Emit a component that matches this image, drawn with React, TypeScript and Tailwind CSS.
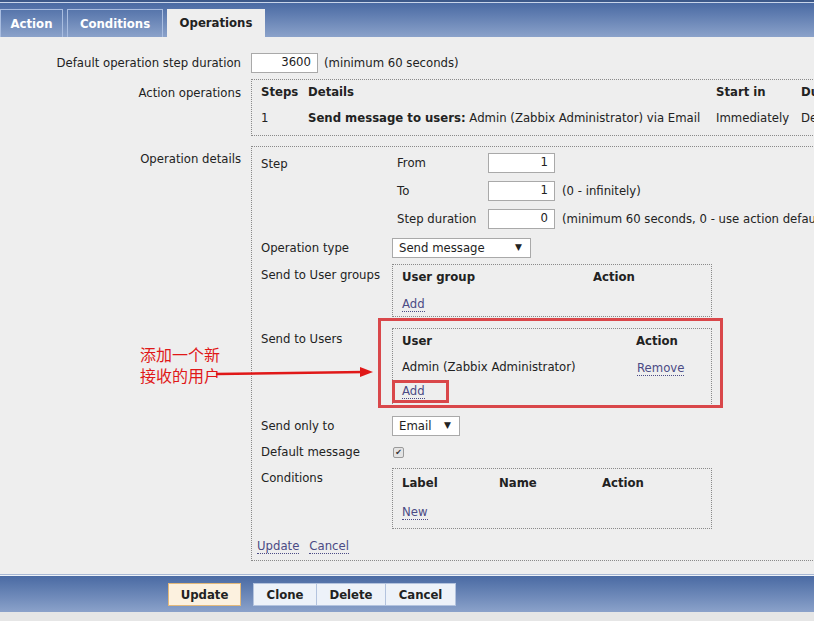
import React from "react";

const Link = ({ children }: { children: React.ReactNode }) => (
  <span className="text-[#4b4b85] border-b border-dotted border-[#4b4b85] leading-[14px]">{children}</span>
);

const Input = ({ value, w }: { value: string; w: string }) => (
  <div className={`${w} h-[20px] shrink-0 bg-white border border-[#a9a9a9] flex items-center justify-end pr-[6px]`}>{value}</div>
);

const Select = ({ value, w }: { value: string; w: string }) => (
  <div className={`${w} h-[20px] shrink-0 bg-white border border-[#a9a9a9] flex items-center justify-between pl-[6px] pr-[8px]`}>
    <span className="pt-[2px]">{value}</span>
    <span className="text-[9px]">▼</span>
  </div>
);

const Btn = "font-['DejaVu_Sans_Condensed','DejaVu_Sans',sans-serif] font-bold text-[13px]";

export default function App() {
  return (
    <div className="w-[814px] h-[621px] overflow-hidden relative bg-[#eeeeee] text-[11.7px] text-[#222] font-['DejaVu_Sans',sans-serif]">
      {/* header */}
      <div className="h-[2px] bg-[#3c5889]" />
      <div className="h-[1px] bg-[#c9d5ea]" />
      <div className="h-[34px] bg-gradient-to-b from-[#4a6aa3] to-[#8ba2ca] flex items-end gap-[4px]">
        <div className={`w-[63px] h-[28px] border border-b-0 border-[#a9bde0] flex items-center justify-center text-white ${Btn}`}>Action</div>
        <div className={`w-[96px] h-[28px] border border-b-0 border-[#a9bde0] flex items-center justify-center text-white ${Btn}`}>Conditions</div>
        <div className={`w-[98px] h-[28px] bg-[#eeeeee] flex items-center justify-center text-[#222] ${Btn}`}>Operations</div>
      </div>

      {/* row 1 */}
      <div className="flex items-center mt-[16px] h-[20px]">
        <div className="w-[241px] shrink-0 text-right pt-[1px]">Default operation step duration</div>
        <div className="ml-[10px] flex items-center gap-[6px]">
          <Input value="3600" w="w-[67px]" />
          <span className="pt-[1px]">(minimum 60 seconds)</span>
        </div>
      </div>

      {/* row 2 */}
      <div className="flex items-start mt-[6px]">
        <div className="w-[241px] shrink-0 text-right pt-[6px]">Action operations</div>
        <div className="ml-[10px] w-[620px] shrink-0 border border-dotted border-[#8a8a8a] pl-[9px] pt-[3px] pb-[6px] flex flex-col gap-[6px]">
          <div className="flex h-[20px] items-center font-bold whitespace-nowrap">
            <div className="w-[47px] shrink-0">Steps</div>
            <div className="w-[408px] shrink-0">Details</div>
            <div className="w-[85px] shrink-0">Start in</div>
            <div>Duration</div>
          </div>
          <div className="flex h-[20px] items-center whitespace-nowrap">
            <div className="w-[47px] shrink-0">1</div>
            <div className="w-[408px] shrink-0"><b>Send message to users:</b> Admin (Zabbix Administrator) via Email</div>
            <div className="w-[85px] shrink-0">Immediately</div>
            <div>Default</div>
          </div>
        </div>
      </div>

      {/* row 3 */}
      <div className="flex items-start mt-[10px]">
        <div className="w-[241px] shrink-0 text-right pt-[5px]">Operation details</div>
        <div className="ml-[10px] w-[620px] h-[415px] shrink-0 border border-dotted border-[#8a8a8a] pl-[9px] pt-[6px] flex flex-col">
          {/* step */}
          <div className="flex items-start">
            <div className="w-[131px] shrink-0 pt-[3px]">Step</div>
            <div className="flex flex-col gap-[8px] pl-[5px]">
              <div className="flex items-center h-[20px]">
                <div className="w-[91px] shrink-0 pt-[1px]">From</div>
                <Input value="1" w="w-[67px]" />
              </div>
              <div className="flex items-center h-[20px]">
                <div className="w-[91px] shrink-0 pt-[1px]">To</div>
                <Input value="1" w="w-[67px]" />
                <span className="ml-[7px] pt-[1px]">(0 - infinitely)</span>
              </div>
              <div className="flex items-center h-[20px]">
                <div className="w-[91px] shrink-0 pt-[1px]">Step duration</div>
                <Input value="0" w="w-[67px]" />
                <span className="ml-[7px] pt-[1px] whitespace-nowrap">(minimum 60 seconds, 0 - use action default)</span>
              </div>
            </div>
          </div>
          {/* operation type */}
          <div className="flex items-center mt-[9px] h-[20px]">
            <div className="w-[131px] shrink-0 pt-[1px]">Operation type</div>
            <Select value="Send message" w="w-[139px]" />
          </div>
          {/* user groups */}
          <div className="flex items-start mt-[6px]">
            <div className="w-[131px] shrink-0 pt-[3px]">Send to User groups</div>
            <div className="w-[320px] h-[53px] shrink-0 border border-dotted border-[#8a8a8a] pl-[9px] pt-[5px] flex flex-col">
              <div className="flex font-bold h-[16px] items-center">
                <div className="w-[191px] shrink-0">User group</div>
                <div>Action</div>
              </div>
              <div className="mt-[10px]"><Link>Add</Link></div>
            </div>
          </div>
          {/* users */}
          <div className="flex items-start mt-[11px]">
            <div className="w-[131px] shrink-0 pt-[3px]">Send to Users</div>
            <div className="w-[320px] h-[78px] shrink-0 border border-dotted border-[#8a8a8a] pl-[9px] pt-[5px] flex flex-col">
              <div className="flex font-bold h-[16px] items-center">
                <div className="w-[234px] shrink-0">User</div>
                <div>Action</div>
              </div>
              <div className="flex h-[16px] items-center mt-[10px]">
                <div className="w-[235px] shrink-0">Admin (Zabbix Administrator)</div>
                <Link>Remove</Link>
              </div>
              <div className="mt-[7px]"><Link>Add</Link></div>
            </div>
          </div>
          {/* send only to */}
          <div className="flex items-center mt-[10px] h-[20px]">
            <div className="w-[131px] shrink-0 pt-[2px]">Send only to</div>
            <Select value="Email" w="w-[68px]" />
          </div>
          {/* default message */}
          <div className="flex items-center mt-[6px] h-[20px]">
            <div className="w-[131px] shrink-0 pt-[2px]">Default message</div>
            <div className="ml-[1px] mt-[1px] w-[11px] h-[11px] border border-[#9a9a9a] bg-[#e4e4e4] rounded-[2px] flex items-center justify-center text-[8px] leading-none text-[#333]">✔</div>
          </div>
          {/* conditions */}
          <div className="flex items-start mt-[6px]">
            <div className="w-[131px] shrink-0 pt-[2px]">Conditions</div>
            <div className="w-[320px] h-[61px] shrink-0 border border-dotted border-[#8a8a8a] pl-[9px] pt-[7px] flex flex-col">
              <div className="flex font-bold h-[16px] items-center">
                <div className="w-[97px] shrink-0">Label</div>
                <div className="w-[103px] shrink-0">Name</div>
                <div>Action</div>
              </div>
              <div className="mt-[12px]"><Link>New</Link></div>
            </div>
          </div>
          {/* update / cancel */}
          <div className="flex gap-[10px] mt-[10px] -ml-[4px]">
            <Link>Update</Link>
            <Link>Cancel</Link>
          </div>
        </div>
      </div>

      {/* bottom bar */}
      <div className="mt-[13px] h-[1px] bg-[#a7b7d3]" />
      <div className="h-[1px] bg-[#eef2f8]" />
      <div className="h-[36px] bg-gradient-to-b from-[#4a6aa3] to-[#8ba2ca] flex items-start pt-[7px] pl-[168px]">
        <div className={`w-[73px] h-[23px] bg-[#fcf1df] border border-[#e3b97a] flex items-center justify-center ${Btn}`}>Update</div>
        <div className="ml-[12px] flex">
          <div className={`w-[64px] h-[23px] bg-[#edf2f9] border border-[#b3c3de] flex items-center justify-center ${Btn}`}>Clone</div>
          <div className={`w-[69px] h-[23px] bg-[#edf2f9] border border-l-0 border-[#b3c3de] flex items-center justify-center ${Btn}`}>Delete</div>
          <div className={`w-[70px] h-[23px] bg-[#edf2f9] border border-l-0 border-[#b3c3de] flex items-center justify-center ${Btn}`}>Cancel</div>
        </div>
      </div>
      <div className="h-[20px] bg-[#e6e6e6]" />

      {/* annotations */}
      <div className="absolute left-[378px] top-[318px] w-[345px] h-[90px] border-[3px] border-[#d9474a]" />
      <div className="absolute left-[392px] top-[380px] w-[57px] h-[23px] border-[3px] border-[#d9474a]" />
      <div className="absolute left-[140px] top-[344px] text-[16px] leading-[21px] text-[#e01818] font-['Noto_Sans_CJK_SC',sans-serif]">
        <div>添加一个新</div>
        <div>接收的用户</div>
      </div>
      <svg className="absolute left-[200px] top-[362px]" width="180" height="20" viewBox="0 0 180 20">
        <line x1="16" y1="12" x2="164" y2="10" stroke="#e01818" strokeWidth="2.5" />
        <polygon points="160,5 173,10 160,15" fill="#e01818" />
      </svg>
    </div>
  );
}
